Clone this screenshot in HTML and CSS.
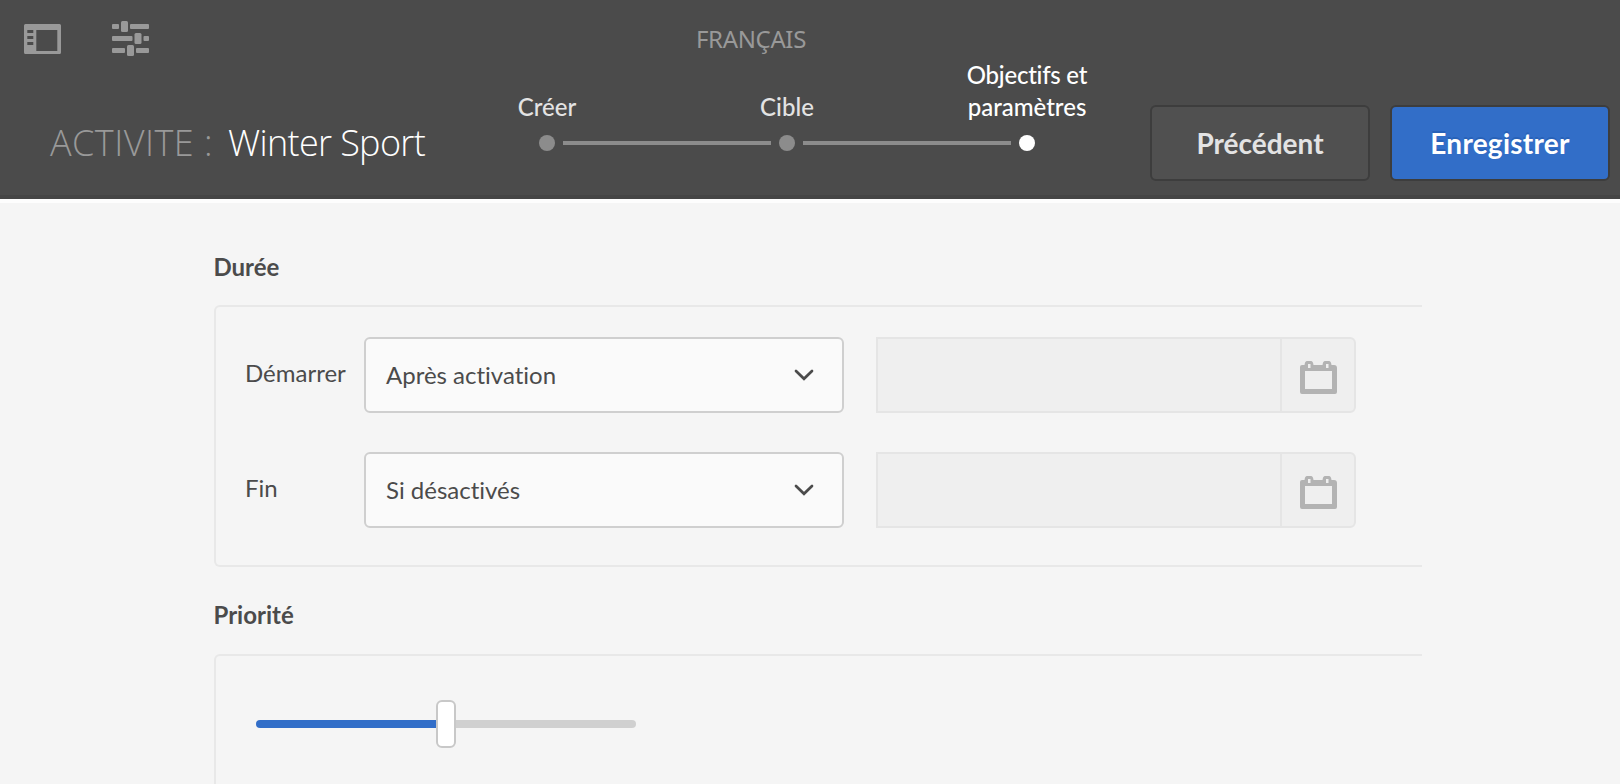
FILE: index.html
```html
<!DOCTYPE html>
<html lang="fr">
<head>
<meta charset="utf-8">
<title>Activité : Winter Sport</title>
<link rel="stylesheet" href="styles.css">
</head>
<body>
<header class="header">
  <div class="topbar">
    <div class="tools">
      <svg class="icon-panel" width="37" height="30" viewBox="0 0 37 30"><path fill="#999" fill-rule="evenodd" d="M1.500 0h34Q37 0 37 1.500v27Q37 30 35.500 30h-34Q0 30 0 28.500v-27Q0 0 1.500 0zM12.300 6v21h21V6zM3.300 6v3h6V6zM3.300 12v3h6v-3zM3.300 18v3h6v-3z"/></svg>
      <svg class="icon-sliders" width="37" height="35" viewBox="0 0 37 35"><g fill="#999"><rect x="0" y="3" width="7" height="5" rx="1"/><rect x="9" y="0" width="7" height="11" rx="1.500"/><rect x="18" y="3" width="19" height="5" rx="1"/><rect x="0" y="15" width="20.500" height="5" rx="1"/><rect x="22.500" y="12" width="7" height="11" rx="1.500"/><rect x="31.500" y="15" width="5.500" height="5" rx="1"/><rect x="0" y="27" width="13" height="5" rx="1"/><rect x="15" y="24" width="7" height="11" rx="1.500"/><rect x="24" y="27" width="13" height="5" rx="1"/></g></svg>
    </div>
    <div class="language">FRANÇAIS</div>
  </div>
  <div class="mainbar">
    <h1 class="title"><span class="title-type">ACTIVITE :</span><span class="title-name">Winter Sport</span></h1>
    <ol class="steps">
      <li class="step"><span class="label">Créer</span><span class="rail"><i class="line blank"></i><i class="dot"></i><i class="line"></i></span></li>
      <li class="step"><span class="label">Cible</span><span class="rail"><i class="line"></i><i class="dot"></i><i class="line"></i></span></li>
      <li class="step current"><span class="label"><span class="tight">Objectifs et</span><br>paramètres</span><span class="rail"><i class="line"></i><i class="dot"></i><i class="line blank"></i></span></li>
    </ol>
    <div class="actions">
      <button class="btn">Précédent</button>
      <button class="btn primary">Enregistrer</button>
    </div>
  </div>
</header>
<main class="content">
  <h2 class="heading">Durée</h2>
  <section class="panel duration">
    <div class="row">
      <label class="name">Démarrer</label>
      <div class="select"><span>Après activation</span><svg width="20" height="12" viewBox="0 0 20 12"><path d="M2 2l8 7.800L18 2" fill="none" stroke="#4b4b4b" stroke-width="2.700" stroke-linecap="round"/></svg></div>
      <div class="date"><div class="date-input"></div><div class="date-button"><svg width="37" height="33" viewBox="0 0 37 33"><path fill="#b3b3b3" fill-rule="evenodd" d="M2 4h2.500Q5 0 7 0h4q2 0 2.500 4h9Q23 0 25 0h4q2 0 2.500 4H34q3 0 3 3v24q0 2-2 2H2q-2 0-2-2V6q0-2 2-2zM5 10v18h27V10zM8 3v4h2.500V3zM26 3v4h2.500V3z"/></svg></div></div>
    </div>
    <div class="row">
      <label class="name">Fin</label>
      <div class="select"><span>Si désactivés</span><svg width="20" height="12" viewBox="0 0 20 12"><path d="M2 2l8 7.800L18 2" fill="none" stroke="#4b4b4b" stroke-width="2.700" stroke-linecap="round"/></svg></div>
      <div class="date"><div class="date-input"></div><div class="date-button"><svg width="37" height="33" viewBox="0 0 37 33"><path fill="#b3b3b3" fill-rule="evenodd" d="M2 4h2.500Q5 0 7 0h4q2 0 2.500 4h9Q23 0 25 0h4q2 0 2.500 4H34q3 0 3 3v24q0 2-2 2H2q-2 0-2-2V6q0-2 2-2zM5 10v18h27V10zM8 3v4h2.500V3zM26 3v4h2.500V3z"/></svg></div></div>
    </div>
  </section>
  <h2 class="heading">Priorité</h2>
  <section class="panel priority">
    <div class="slider"><i class="fill"></i><i class="handle"></i><i class="rest"></i></div>
  </section>
</main>
</body>
</html>
```
FILE: styles.css
```css
* { box-sizing: border-box; }
body {
  margin: 0;
  height: 784px;
  overflow: hidden;
  background: #f5f5f5;
  color: #4b4b4b;
  font: 24px/32px Lato, sans-serif;
  font-variant-ligatures: none;
}
h1, h2, ol { margin: 0; padding: 0; font-weight: normal; }
svg { display: block; flex: none; }

.header {
  height: 199px;
  background: #4b4b4b;
  border-bottom: 4px solid #454545;
}
.topbar {
  display: grid;
  grid-template-columns: 696px 1fr;
  height: 58px;
}
.tools { display: flex; align-items: flex-start; gap: 51px; padding: 21px 0 0 23.500px; }
.icon-panel { margin-top: 3px; }
.language {
  padding-top: 23px;
  color: #999;
  font-family: "Noto Sans", sans-serif;
  letter-spacing: -0.35px;
}
.mainbar { display: flex; height: 137px; }
.title {
  display: flex;
  width: 427px;
  padding: 61px 0 0 50px;
  font: 300 36px/48px "Open Sans", sans-serif;
  white-space: pre;
}
.title-type { width: 178px; color: #999; letter-spacing: 0.45px; }
.title-name { color: #fff; letter-spacing: -0.65px; }

.steps { display: flex; width: 720px; list-style: none; }
.step {
  width: 240px;
  display: flex;
  flex-direction: column;
  justify-content: flex-end;
  padding-bottom: 44px;
  color: #e3e3e3;
  font-weight: 500;
  text-align: center;
}
.current { color: #fff; }
.tight { letter-spacing: -0.25px; }
.rail { display: flex; align-items: center; gap: 8px; margin-top: 12px; }
.line { flex: 1; height: 4px; background: #8c8c8c; }
.blank { background: none; }
.dot { width: 16px; height: 16px; border-radius: 50%; background: #8c8c8c; }
.current .dot { background: #fff; }

.actions { display: flex; gap: 20px; padding: 47px 0 0 3px; }
.btn {
  width: 220px;
  height: 76px;
  padding: 0;
  border: 2px solid #3d3d3d;
  border-radius: 6px;
  background: #505050;
  color: #e3e3e3;
  font: 700 28px/36px Lato, sans-serif;
}
.primary { background: #326ec8; color: #fff; letter-spacing: 0.25px; text-shadow: 0 -2px #2862b8; }

.content {
  border-top: 4px solid #fdfdfd;
  padding: 48px 198px 0 214px;
}
.heading { height: 54px; font-size: 24px; font-weight: 700; text-indent: -0.5px; }
.panel {
  border: 2px solid #e8e8e8;
  border-right: 0;
  border-radius: 6px 0 0 6px;
}
.duration {
  display: flex;
  flex-direction: column;
  gap: 39px;
  height: 262px;
  margin-bottom: 32px;
  padding: 30px 0 0 30px;
}
.duration + .heading { height: 55px; }
.row { display: flex; height: 76px; }
.name { width: 118px; padding-top: 20px; text-indent: -1px; }
.select {
  display: flex;
  justify-content: space-between;
  align-items: center;
  width: 480px;
  margin-right: 32px;
  padding: 0 28px 0 20px;
  border: 2px solid #cfcfcf;
  border-radius: 6px;
  background: #fafafa;
}
.select svg { margin-bottom: 1px; }
.date {
  display: flex;
  width: 480px;
  border: 2px solid #e5e5e5;
  border-radius: 0 6px 6px 0;
  background: #efefef;
}
.date-input { flex: 1; border-right: 2px solid #e5e5e5; }
.date-button { width: 72px; padding: 22px 0 0 17.500px; }

.priority {
  height: 130px;
  padding: 44px 0 0 40px;
  border-bottom: 0;
  border-radius: 6px 0 0 0;
}
.slider { display: flex; align-items: center; width: 380px; height: 48px; }
.fill, .rest { flex: 1; height: 8px; }
.fill { background: #326ec8; border-radius: 4px 0 0 4px; }
.rest { background: #d0d0d0; border-radius: 0 4px 4px 0; }
.handle { width: 20px; height: 48px; border: 2px solid #c8c8c8; border-radius: 6px; background: #fff; }
```
